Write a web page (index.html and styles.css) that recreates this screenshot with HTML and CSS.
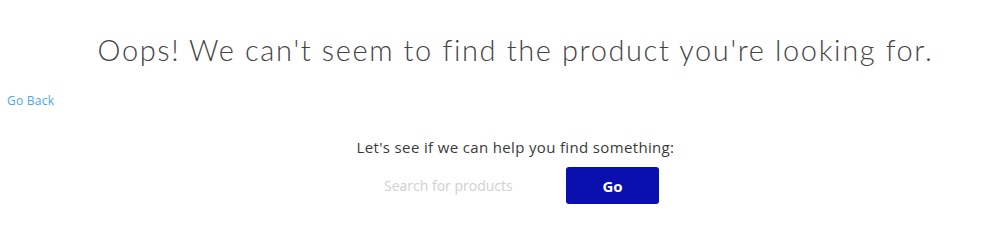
FILE: index.html
```html
<!DOCTYPE html>
<html lang="en">
<head>
<meta charset="utf-8">
<title>Product not found</title>
<link rel="stylesheet" href="styles.css">
</head>
<body>
<main class="page">
  <h1 class="title">Oops! We can't seem to find the product you're looking for.</h1>
  <a class="back" href="#">Go Back</a>
  <section class="help">
    <p class="help-text">Let's see if we can help you find something:</p>
    <form class="search" onsubmit="return false">
      <input class="search-input" type="text" placeholder="Search for products">
      <button class="search-btn" type="submit">Go</button>
    </form>
  </section>
</main>
</body>
</html>
```

FILE: styles.css
```css
html, body {
  margin: 0;
  padding: 0;
  background: #fff;
}
.page {
  font-family: "Open Sans", Lato, sans-serif;
  color: #333;
}
.title {
  margin: 0;
  padding: 32px 0 0 34px;
  text-align: center;
  font-family: Lato, "Open Sans", sans-serif;
  font-weight: 300;
  font-size: 29px;
  letter-spacing: 1.62px;
  line-height: 36px;
  color: #444;
}
.back {
  display: block;
  margin: 25px 0 0 7px;
  font-size: 12px;
  letter-spacing: 0.25px;
  line-height: 16px;
  color: #4aa3f5;
  text-decoration: none;
  width: max-content;
}
.help {
  padding-left: 34px;
  display: flex;
  flex-direction: column;
  align-items: center;
}
.help-text {
  margin: 29px 0 0;
  font-size: 15px;
  letter-spacing: 0.35px;
  line-height: 18px;
  color: #3a3a3a;
}
.search {
  margin-top: 11px;
  display: flex;
  align-items: center;
  gap: 14px;
}
.search-input {
  width: 180px;
  height: 37px;
  box-sizing: border-box;
  border: none;
  outline: none;
  padding: 0 12px;
  font-family: "Open Sans", sans-serif;
  font-size: 14px;
  color: #333;
}
.search-input::placeholder {
  color: #d0d0d0;
}
.search-btn {
  width: 93px;
  height: 37px;
  border: none;
  border-radius: 3px;
  background: #0a0fb0;
  color: #fff;
  font-family: "Open Sans", sans-serif;
  font-weight: 700;
  font-size: 15px;
  cursor: pointer;
}
```
